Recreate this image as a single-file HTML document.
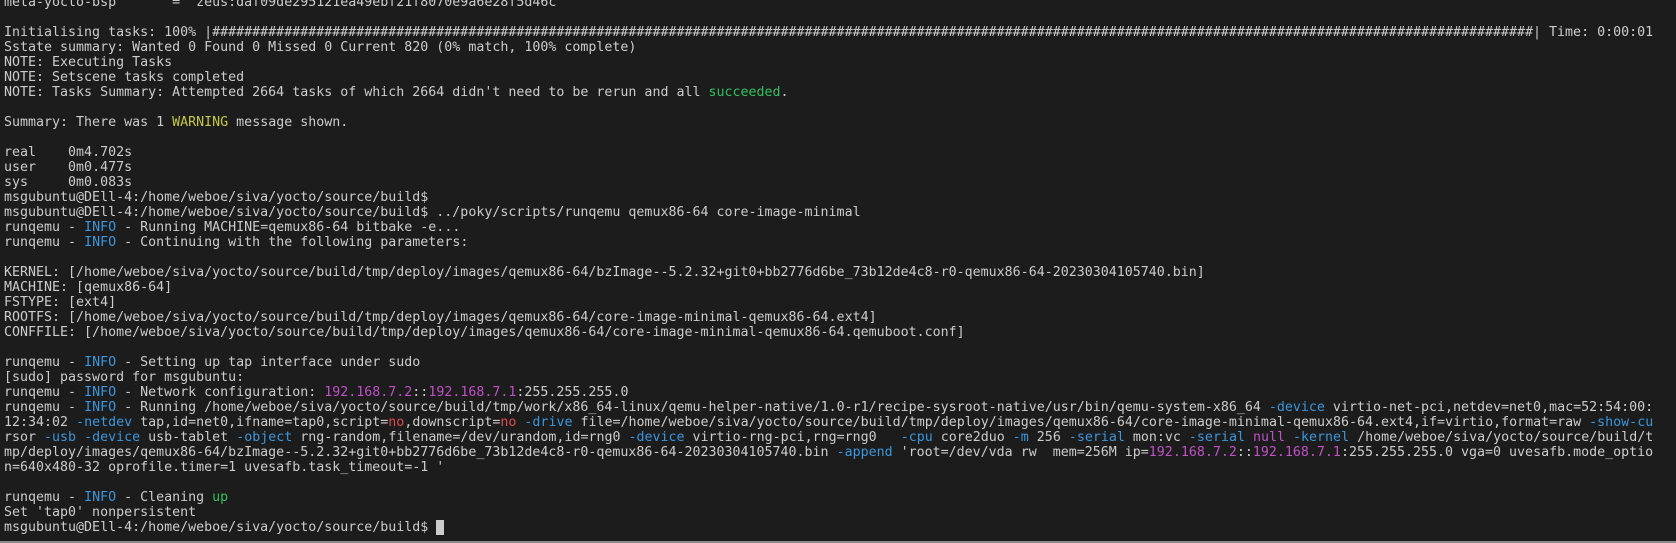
<!DOCTYPE html>
<html><head><meta charset="utf-8"><style>
html,body{margin:0;padding:0;background:#1c1c1c;width:1676px;height:543px;overflow:hidden}
pre{margin:0;position:absolute;left:4px;top:-5.5px;font-family:"DejaVu Sans Mono","Liberation Mono",monospace;font-size:13.3px;line-height:15px;color:#cccccc;white-space:pre}
.b{color:#3a96dd}.m{color:#c050c8}.r{color:#e04a50}.g{color:#30c060}.y{color:#c8c840}
.cur{background:#cccccc}
.strip{position:absolute;left:0;bottom:0;width:1676px;height:2px;background:#8a8a8a}
</style></head><body>
<pre>meta-yocto-bsp       = "zeus:daf09de295121ea49ebf21f8070e9a6e28f5d46c"

Initialising tasks: 100% |#####################################################################################################################################################################| Time: 0:00:01
Sstate summary: Wanted 0 Found 0 Missed 0 Current 820 (0% match, 100% complete)
NOTE: Executing Tasks
NOTE: Setscene tasks completed
NOTE: Tasks Summary: Attempted 2664 tasks of which 2664 didn't need to be rerun and all <span class="g">succeeded</span>.

Summary: There was 1 <span class="y">WARNING</span> message shown.

real	0m4.702s
user	0m0.477s
sys	0m0.083s
msgubuntu@DEll-4:/home/weboe/siva/yocto/source/build$
msgubuntu@DEll-4:/home/weboe/siva/yocto/source/build$ ../poky/scripts/runqemu qemux86-64 core-image-minimal
runqemu - <span class="b">INFO</span> - Running MACHINE=qemux86-64 bitbake -e...
runqemu - <span class="b">INFO</span> - Continuing with the following parameters:

KERNEL: [/home/weboe/siva/yocto/source/build/tmp/deploy/images/qemux86-64/bzImage--5.2.32+git0+bb2776d6be_73b12de4c8-r0-qemux86-64-20230304105740.bin]
MACHINE: [qemux86-64]
FSTYPE: [ext4]
ROOTFS: [/home/weboe/siva/yocto/source/build/tmp/deploy/images/qemux86-64/core-image-minimal-qemux86-64.ext4]
CONFFILE: [/home/weboe/siva/yocto/source/build/tmp/deploy/images/qemux86-64/core-image-minimal-qemux86-64.qemuboot.conf]

runqemu - <span class="b">INFO</span> - Setting up tap interface under sudo
[sudo] password for msgubuntu:
runqemu - <span class="b">INFO</span> - Network configuration: <span class="m">192.168.7.2</span>::<span class="m">192.168.7.1</span>:255.255.255.0
runqemu - <span class="b">INFO</span> - Running /home/weboe/siva/yocto/source/build/tmp/work/x86_64-linux/qemu-helper-native/1.0-r1/recipe-sysroot-native/usr/bin/qemu-system-x86_64 <span class="b">-device</span> virtio-net-pci,netdev=net0,mac=52:54:00:
12:34:02 <span class="b">-netdev</span> tap,id=net0,ifname=tap0,script=<span class="r">no</span>,downscript=<span class="r">no</span> <span class="b">-drive</span> file=/home/weboe/siva/yocto/source/build/tmp/deploy/images/qemux86-64/core-image-minimal-qemux86-64.ext4,if=virtio,format=raw <span class="b">-show-cu</span>
rsor <span class="b">-usb</span> <span class="b">-device</span> usb-tablet <span class="b">-object</span> rng-random,filename=/dev/urandom,id=rng0 <span class="b">-device</span> virtio-rng-pci,rng=rng0   <span class="b">-cpu</span> core2duo <span class="b">-m</span> 256 <span class="b">-serial</span> mon:vc <span class="b">-serial</span> <span class="m">null</span> <span class="b">-kernel</span> /home/weboe/siva/yocto/source/build/t
mp/deploy/images/qemux86-64/bzImage--5.2.32+git0+bb2776d6be_73b12de4c8-r0-qemux86-64-20230304105740.bin <span class="b">-append</span> 'root=/dev/vda rw  mem=256M ip=<span class="m">192.168.7.2</span>::<span class="m">192.168.7.1</span>:255.255.255.0 vga=0 uvesafb.mode_optio
n=640x480-32 oprofile.timer=1 uvesafb.task_timeout=-1 '

runqemu - <span class="b">INFO</span> - Cleaning <span class="g">up</span>
Set 'tap0' nonpersistent
msgubuntu@DEll-4:/home/weboe/siva/yocto/source/build$ <span class="cur"> </span></pre>
<div class="strip"></div>
</body></html>
